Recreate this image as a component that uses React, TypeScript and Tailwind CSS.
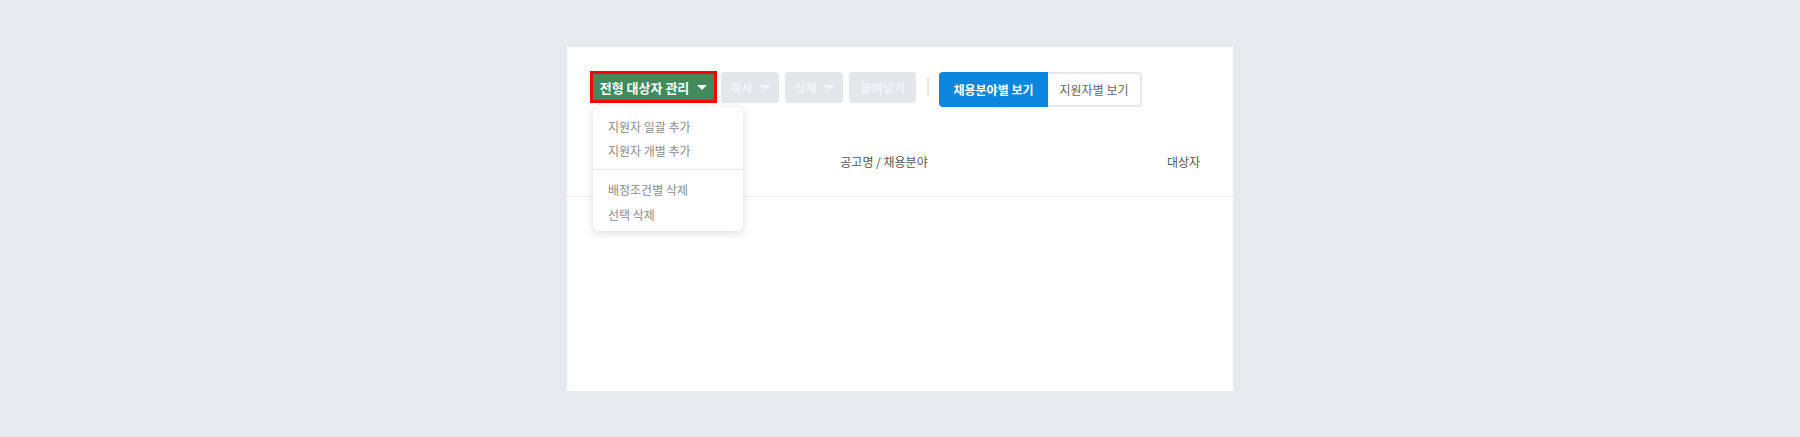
import React from "react";

function Caret({ className }: { className?: string }) {
  return (
    <svg width="10" height="5" viewBox="0 0 10 5" className={className}>
      <polygon points="0,0 10,0 5,5" fill="currentColor" />
    </svg>
  );
}

export default function App() {
  return (
    <div
      className="w-full h-[437px] bg-[#e8ebee] pt-[47px]"
      style={{ fontFamily: '"Noto Sans CJK KR", "Noto Sans", sans-serif' }}
    >
      <div className="relative mx-auto w-[666px] h-[344px] bg-white">
        {/* toolbar */}
        <div className="flex items-start pt-[24px] pl-[23px]">
          <button className="flex h-[32px] w-[127px] items-center justify-center gap-[8px] border-[3px] border-[#ff0000] bg-[#3f8b5d] text-[13px] font-bold text-white leading-none">
            <span>전형 대상자 관리</span>
            <Caret className="text-white" />
          </button>
          <button className="ml-[4px] mt-[1px] flex h-[31px] w-[58px] items-center justify-center gap-[7px] rounded-[4px] bg-[#e3e6eb] text-[12px] font-bold text-[#f4f5f7] leading-none">
            <span>복사</span>
            <Caret className="text-[#f4f5f7]" />
          </button>
          <button className="ml-[6px] mt-[1px] flex h-[31px] w-[58px] items-center justify-center gap-[7px] rounded-[4px] bg-[#e3e6eb] text-[12px] font-bold text-[#f4f5f7] leading-none">
            <span>삭제</span>
            <Caret className="text-[#f4f5f7]" />
          </button>
          <button className="ml-[6px] mt-[1px] flex h-[31px] w-[67px] items-center justify-center rounded-[4px] bg-[#e3e6eb] text-[12px] font-bold text-[#f4f5f7] leading-none">
            붙여넣기
          </button>
          <div className="ml-[11px] mt-[7px] h-[18px] w-[2px] bg-[#e3e6eb]" />
          <div className="ml-[10px] mt-[1px] flex h-[35px] rounded-[4px]">
            <button className="flex h-[35px] w-[109px] items-center justify-center rounded-l-[4px] bg-[#0b86de] text-[12px] font-bold text-white leading-none">
              채용분야별 보기
            </button>
            <button className="flex h-[35px] w-[94px] items-center justify-center rounded-r-[4px] border-2 border-l-0 border-[#e6e8eb] bg-white text-[12px] text-[#666] leading-none">
              지원자별 보기
            </button>
          </div>
        </div>

        {/* table header */}
        <div className="mt-[20px] grid h-[70px] grid-cols-[67px_1fr_99px] items-center border-b border-[#eef0f2] text-[12px] text-[#555]">
          <div />
          <div className="text-center">공고명 / 채용분야</div>
          <div className="text-center">대상자</div>
        </div>

        {/* dropdown menu */}
        <div className="absolute left-[26px] top-[60px] w-[150px] rounded-[6px] bg-white pt-[8px] pb-[4px] shadow-[0_2px_8px_rgba(0,0,0,0.15)]">
          <div className="flex h-[24px] items-center pl-[15px] text-[12px] text-[#8c8c8c]">지원자 일괄 추가</div>
          <div className="flex h-[24px] items-center pl-[15px] text-[12px] text-[#8c8c8c]">지원자 개별 추가</div>
          <div className="mt-[6px] mb-[7px] h-px bg-[#e6e6e6]" />
          <div className="flex h-[25px] items-center pl-[15px] text-[12px] text-[#8c8c8c]">배정조건별 삭제</div>
          <div className="flex h-[25px] items-center pl-[15px] text-[12px] text-[#8c8c8c]">선택 삭제</div>
        </div>
      </div>
    </div>
  );
}
